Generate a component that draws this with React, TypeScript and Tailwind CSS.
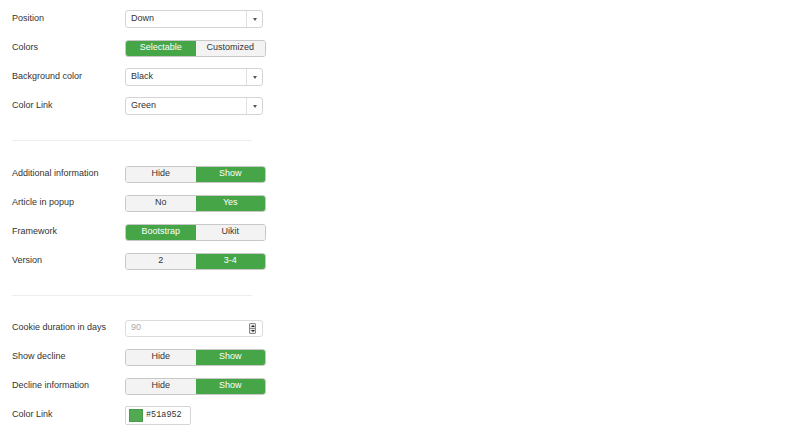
const font = { fontFamily: '"Liberation Sans", Arial, sans-serif' };

function Row({ label, children }: { label: string; children: React.ReactNode }) {
  return (
    <div className="flex items-center h-[18px]">
      <div className="w-[113px] text-[9px] text-[#333]">{label}</div>
      {children}
    </div>
  );
}

function Select({ value }: { value: string }) {
  return (
    <div className="flex items-stretch w-[138px] h-[18px] border border-[#d4d4d4] rounded-[3px] bg-white">
      <div className="flex-1 flex items-center pl-[5px] text-[9px] text-[#333]">{value}</div>
      <div className="w-[16px] border-l border-[#e0e0e0] flex items-center justify-center">
        <div className="w-0 h-0 border-l-[2px] border-r-[2px] border-t-[3px] border-l-transparent border-r-transparent border-t-[#555]" />
      </div>
    </div>
  );
}

function Toggle({ options, active }: { options: [string, string]; active: number }) {
  return (
    <div className="flex w-[141px] h-[17px] rounded-[3px] overflow-hidden border border-[#c8c8c8]">
      {options.map((o, i) => (
        <div
          key={o}
          className={
            i === active
              ? "flex-1 flex items-center justify-center text-[9px] text-white bg-[#46a546]"
              : "flex-1 flex items-center justify-center text-[9px] text-[#333] bg-[#f3f3f3]"
          }
        >
          {o}
        </div>
      ))}
    </div>
  );
}

function Sep({ bottom }: { bottom: string }) {
  return <div className={"ml-[12px] w-[240px] h-px bg-[#eeeeee] mt-[25px] " + bottom} />;
}

export default function App() {
  return (
    <div className="w-[800px] h-[433px] bg-white overflow-hidden" style={font}>
      <div className="pl-[12px] pt-[10px] flex flex-col gap-[11px]">
        <Row label="Position">
          <Select value="Down" />
        </Row>
        <Row label="Colors">
          <Toggle options={["Selectable", "Customized"]} active={0} />
        </Row>
        <Row label="Background color">
          <Select value="Black" />
        </Row>
        <Row label="Color Link">
          <Select value="Green" />
        </Row>
      </div>
      <Sep bottom="mb-[24px]" />
      <div className="pl-[12px] flex flex-col gap-[11px]">
        <Row label="Additional information">
          <Toggle options={["Hide", "Show"]} active={1} />
        </Row>
        <Row label="Article in popup">
          <Toggle options={["No", "Yes"]} active={1} />
        </Row>
        <Row label="Framework">
          <Toggle options={["Bootstrap", "Uikit"]} active={0} />
        </Row>
        <Row label="Version">
          <Toggle options={["2", "3-4"]} active={1} />
        </Row>
      </div>
      <Sep bottom="mb-[23px]" />
      <div className="pl-[12px] flex flex-col gap-[11px]">
        <Row label="Cookie duration in days">
          <div className="flex items-center w-[138px] h-[17px] border border-[#dcdcdc] rounded-[3px] bg-white">
            <div className="flex-1 pl-[5px] text-[9px] text-[#aaa]">90</div>
            <div className="mr-[6px] w-[7px] h-[11px] border border-[#8a8a8a] rounded-[1px] flex flex-col">
              <div className="flex-1 bg-[#e6e6e6] border-b border-[#8a8a8a] flex items-center justify-center">
                <div className="w-0 h-0 border-l-[2px] border-r-[2px] border-b-[2px] border-l-transparent border-r-transparent border-b-[#222]" />
              </div>
              <div className="flex-1 bg-[#e6e6e6] flex items-center justify-center">
                <div className="w-0 h-0 border-l-[2px] border-r-[2px] border-t-[2px] border-l-transparent border-r-transparent border-t-[#222]" />
              </div>
            </div>
          </div>
        </Row>
        <Row label="Show decline">
          <Toggle options={["Hide", "Show"]} active={1} />
        </Row>
        <Row label="Decline information">
          <Toggle options={["Hide", "Show"]} active={1} />
        </Row>
        <Row label="Color Link">
          <div className="flex items-center gap-[3px] w-[66px] h-[19px] border border-[#d4d4d4] rounded-[2px] bg-white pl-[3px]">
            <div className="w-[14px] h-[13px] bg-[#51a952] border border-[#4a9a4b]" />
            <span className="text-[8.5px] text-[#333]" style={{ fontFamily: '"Liberation Mono", monospace' }}>
              #51a952
            </span>
          </div>
        </Row>
      </div>
    </div>
  );
}
